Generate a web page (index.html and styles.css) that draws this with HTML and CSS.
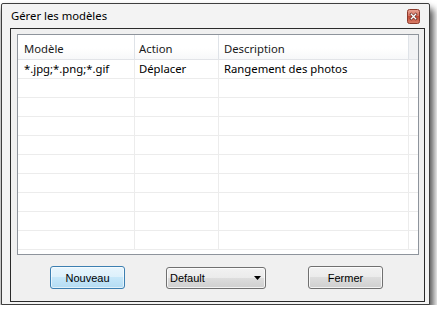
FILE: index.html
```html
<!DOCTYPE html>
<html lang="fr">
<head>
<meta charset="utf-8">
<title>Gérer les modèles</title>
<link rel="stylesheet" href="styles.css">
</head>
<body>
<div class="window">
  <div class="titlebar">
    <span class="title">Gérer les modèles</span>
    <span class="close" aria-label="Fermer">
      <svg width="13" height="15" viewBox="0 0 13 15">
        <defs>
          <linearGradient id="cg" x1="0" y1="0" x2="0" y2="1">
            <stop offset="0" stop-color="#e9a596"/>
            <stop offset="0.5" stop-color="#d46c5a"/>
            <stop offset="0.5" stop-color="#c24a37"/>
            <stop offset="1" stop-color="#d9806a"/>
          </linearGradient>
        </defs>
        <rect x="0.5" y="0.5" width="12" height="14" rx="2" fill="url(#cg)" stroke="#8c3a2c"/>
        <path d="M4.3 5.3 L8.7 9.7 M8.7 5.3 L4.3 9.7" stroke="#5a2018" stroke-width="2.6" stroke-linecap="square"/>
        <path d="M4.3 5.3 L8.7 9.7 M8.7 5.3 L4.3 9.7" stroke="#ffffff" stroke-width="1.4" stroke-linecap="square"/>
      </svg>
    </span>
  </div>
  <div class="client">
    <div class="list">
      <div class="row head">
        <div class="cell c1">Modèle</div>
        <div class="cell c2">Action</div>
        <div class="cell c3">Description</div>
        <div class="cell c4"></div>
      </div>
      <div class="row">
        <div class="cell c1">*.jpg;*.png;*.gif</div>
        <div class="cell c2">Déplacer</div>
        <div class="cell c3">Rangement des photos</div>
        <div class="cell c4"></div>
      </div>
      <div class="row"><div class="cell c1"></div><div class="cell c2"></div><div class="cell c3"></div><div class="cell c4"></div></div>
      <div class="row"><div class="cell c1"></div><div class="cell c2"></div><div class="cell c3"></div><div class="cell c4"></div></div>
      <div class="row"><div class="cell c1"></div><div class="cell c2"></div><div class="cell c3"></div><div class="cell c4"></div></div>
      <div class="row"><div class="cell c1"></div><div class="cell c2"></div><div class="cell c3"></div><div class="cell c4"></div></div>
      <div class="row"><div class="cell c1"></div><div class="cell c2"></div><div class="cell c3"></div><div class="cell c4"></div></div>
      <div class="row"><div class="cell c1"></div><div class="cell c2"></div><div class="cell c3"></div><div class="cell c4"></div></div>
      <div class="row"><div class="cell c1"></div><div class="cell c2"></div><div class="cell c3"></div><div class="cell c4"></div></div>
      <div class="row"><div class="cell c1"></div><div class="cell c2"></div><div class="cell c3"></div><div class="cell c4"></div></div>
      <div class="row"><div class="cell c1"></div><div class="cell c2"></div><div class="cell c3"></div><div class="cell c4"></div></div>
    </div>
    <div class="actions">
      <button class="btn btn-default" type="button">Nouveau</button>
      <div class="combo">
        <span>Default</span>
        <svg class="arrow" width="7" height="4" viewBox="0 0 7 4"><path d="M0 0 H7 L3.5 4 Z" fill="#000"/></svg>
      </div>
      <button class="btn btn-close" type="button">Fermer</button>
    </div>
  </div>
</div>
</body>
</html>
```

FILE: styles.css
```css
html, body {
  margin: 0;
  padding: 0;
  background: #ffffff;
}

body {
  font-family: "Noto Sans", "Open Sans", sans-serif;
  font-size: 11.3px;
  color: #000;
}

.window {
  margin: 3px 0 0 1px;
  width: 429px;
  height: 302px;
  box-sizing: border-box;
  border: 1px solid #3e3e3e;
  border-radius: 2px 2px 0 0;
  background: #f3f3f3;
  box-shadow: 4px 6px 7px 0 rgba(0, 0, 0, 0.6), -1px 4px 6px rgba(0, 0, 0, 0.3);
  display: flex;
  flex-direction: column;
}

.titlebar {
  height: 24px;
  display: flex;
  align-items: flex-start;
  padding-left: 9px;
  box-sizing: border-box;
}

.title {
  margin-top: 4px;
  line-height: 16px;
  color: #000;
}

.close {
  margin-left: auto;
  margin-right: 9px;
  margin-top: 5px;
  width: 13px;
  height: 15px;
  display: block;
}

.close svg {
  display: block;
}

.client {
  margin: 0 4px 2px 8px;
  height: 274px;
  box-sizing: border-box;
  border: 1px solid #2a2a2a;
  background: #f0f0f0;
  display: flex;
  flex-direction: column;
}

.list {
  margin: 5px 5px 0 6px;
  height: 221px;
  box-sizing: border-box;
  border: 1px solid #8e949c;
  background: #ffffff;
  overflow: hidden;
}

.row {
  display: flex;
  height: 19px;
  box-sizing: border-box;
  border-bottom: 1px solid #ececec;
}

.row.head {
  height: 25px;
  border-bottom: 1px solid #e2e4e8;
  background: linear-gradient(#ffffff 0%, #ffffff 55%, #f7f8f9 100%);
}

.cell {
  box-sizing: border-box;
  border-right: 1px solid #ececec;
  white-space: nowrap;
  overflow: hidden;
  line-height: 18px;
}

.head .cell {
  border-right-color: #dfe3e8;
  padding-top: 6px;
  line-height: 16px;
  color: #1a1a1a;
}

.c1 { width: 117px; padding-left: 6px; }
.c2 { width: 84px; padding-left: 4px; }
.c3 { width: 190px; padding-left: 5px; }
.c4 { width: 9px; border-right: none; }

.head .c4 {
  background: #f1f2f4;
}

.actions {
  display: flex;
  align-items: flex-start;
  margin-top: 11px;
  padding-left: 39px;
}

.btn {
  width: 75px;
  height: 23px;
  margin: 0;
  padding: 0;
  box-sizing: border-box;
  border: 1px solid #707070;
  border-radius: 3px;
  background: linear-gradient(#f2f2f2 0%, #ebebeb 50%, #dddddd 50%, #cfcfcf 100%);
  box-shadow: inset 0 0 0 1px rgba(255, 255, 255, 0.75);
  font-family: "Liberation Sans", Arial, sans-serif;
  font-size: 11px;
  color: #000;
  display: flex;
  align-items: center;
  justify-content: center;
}

.btn-default {
  border-color: #3c7fb1;
  background: linear-gradient(#e8f5fd 0%, #dcf0fb 50%, #c6e7f9 50%, #b4dcf3 100%);
  box-shadow: inset 0 0 0 1px rgba(255, 255, 255, 0.6);
}

.combo {
  margin-left: 41px;
  margin-top: 1px;
  width: 100px;
  height: 22px;
  box-sizing: border-box;
  border: 1px solid #707070;
  border-radius: 3px;
  background: linear-gradient(#f2f2f2 0%, #ebebeb 50%, #dddddd 50%, #cfcfcf 100%);
  box-shadow: inset 0 0 0 1px rgba(255, 255, 255, 0.75);
  font-family: "Liberation Sans", Arial, sans-serif;
  font-size: 11px;
  display: flex;
  align-items: center;
  padding-left: 3px;
  padding-right: 4px;
}

.combo .arrow {
  margin-left: auto;
  display: block;
}

.btn-close {
  margin-left: 42px;
}
```
